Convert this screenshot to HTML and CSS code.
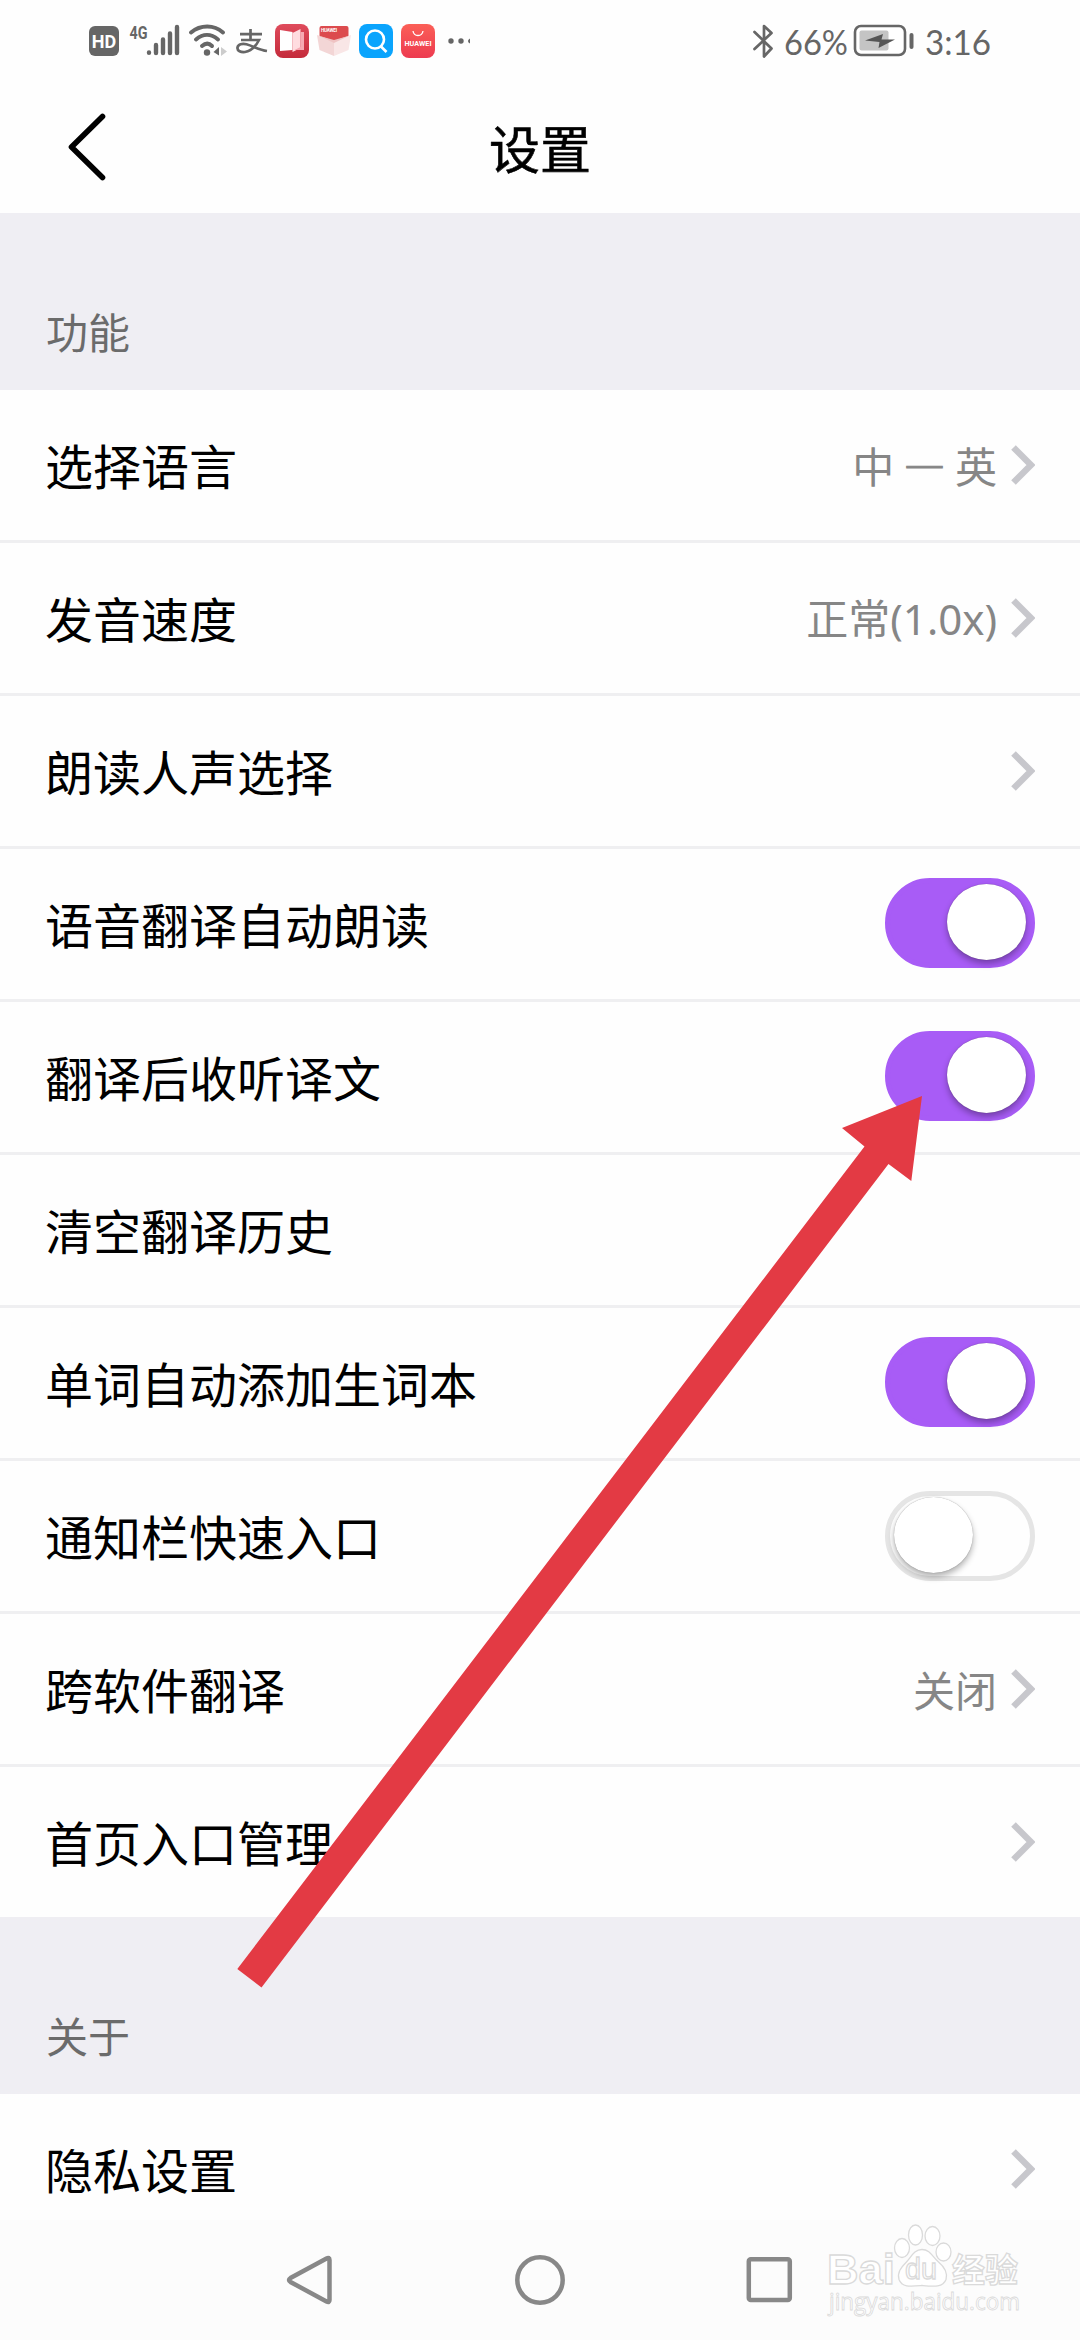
FILE: index.html
```html
<!DOCTYPE html>
<html lang="zh-CN">
<head>
<meta charset="utf-8">
<title>设置</title>
<link rel="stylesheet" href="styles.css">
</head>
<body>
<div class="screen">
  <div class="status">
    <div class="status-left">
      <span class="hd">HD</span>
      <svg class="signal" width="52" height="46" viewBox="128 18 52 46" fill="#666">
        <text class="gen" x="129.500" y="38.500" textLength="18" lengthAdjust="spacingAndGlyphs">4G</text>
        <g stroke="#666" stroke-width="4.400" stroke-linecap="round"><path d="M149 52.500v.2M156 45v8M163 39.500V53M170 33.500V53M177 27V53"/></g>
      </svg>
      <svg class="wifi" width="40" height="34" viewBox="188 24 40 34">
        <g fill="none" stroke="#666" stroke-width="4" stroke-linecap="round"><path d="M191 32.500c9.500-8 23-8 32 0M196 39.500c7-6 15-6 22 0M202 46c3.500-3 7-3 10 0"/></g>
        <circle cx="207" cy="52.500" r="3.200" fill="#666"/>
        <path d="M213.500 52l5.500-5v8.500z" fill="#666"/><path d="M221 47l6 4.500-6 4.500z" fill="#ccc"/>
      </svg>
      <svg class="pay" width="32" height="26" viewBox="236 28 32 26" fill="none" stroke="#666" stroke-width="2.700">
        <path d="M240 34.200h22M250.500 29v11M241 40h18c-3 6-7 11-14 12-4 .5-8-1-7.500-4.500.5-3 4.500-4.500 9-3.200 7 2 13 5.500 20.500 6.700"/>
      </svg>
      <svg class="app book" width="34" height="34" viewBox="0 0 34 34">
        <defs><linearGradient id="r" x1="0" y1="0" x2="0" y2="1"><stop stop-color="#df4b5c"/><stop offset="1" stop-color="#c42b3b"/></linearGradient></defs>
        <rect width="34" height="34" rx="8" fill="url(#r)"/>
        <path d="M5 6l12.500 2v18L5 27z" fill="#fff"/><path d="M17.500 9l8-4v19l-8 4z" fill="#ffdce0"/><path d="M25.500 8H29v18h-9.500l6-3z" fill="#f6a9b3"/>
      </svg>
      <svg class="app" width="34" height="34" viewBox="0 0 34 34">
        <path d="M2.500 4q0-2 2-2h25q2 0 2 2v13h-29z" fill="#dc4b4e"/><text class="boxlogo" x="4" y="8" textLength="16">HUAWEI</text>
        <path d="M0 11l17 6v15L2.500 26z" fill="#f3d6d6"/><path d="M34 11l-17 6v15l14.500-6z" fill="#f9e6e6"/><path d="M2.500 12L17 16l14.500-4L17 19z" fill="#efc3c3"/>
      </svg>
      <svg class="app" width="34" height="34" viewBox="0 0 34 34">
        <rect width="34" height="34" rx="8" fill="#0aa4fd"/><g fill="none" stroke="#fff" stroke-width="2.600"><circle cx="16" cy="15.500" r="9"/><path d="M21.500 22l6 6"/></g>
      </svg>
      <svg class="app" width="34" height="34" viewBox="0 0 34 34">
        <defs><linearGradient id="h" x1="0" y1="0" x2="0" y2="1"><stop stop-color="#fb5f57"/><stop offset="1" stop-color="#ed3b50"/></linearGradient></defs>
        <rect width="34" height="34" rx="8" fill="url(#h)"/><path d="M12 7c1 6 9 6 10 0" fill="none" stroke="#fff" stroke-width="1.300"/>
        <text class="applogo" x="3.500" y="21.500" textLength="27" lengthAdjust="spacingAndGlyphs">HUAWEI</text>
      </svg>
      <svg class="more" width="24" height="6" viewBox="0 0 24 6" fill="#666"><circle cx="3" cy="3" r="2.700"/><circle cx="13" cy="3" r="2.700"/><path d="M22 .5v5q-2-1-2-2.500t2-2.500"/></svg>
    </div>
    <div class="status-right">
      <svg width="22" height="36" viewBox="752 22 22 36" fill="none" stroke="#666" stroke-width="2.700" stroke-linejoin="round" stroke-linecap="round"><path d="M754.500 31l17 16.500-7.500 8V25l7.500 7L754.500 48"/></svg>
      <svg class="pct" width="68" height="60" viewBox="781 10 68 60"><text class="stat" x="784" y="54" textLength="64" lengthAdjust="spacingAndGlyphs">66%</text></svg>
      <svg class="battery" width="62" height="34" viewBox="853 24 62 34">
        <rect x="855" y="26" width="50" height="29" rx="6" fill="#fff" stroke="#666" stroke-width="2.600"/><rect x="859.500" y="30.500" width="29" height="20" rx="2" fill="#c4c4c4"/>
        <path d="M865 40.500l18-6.500-1.500 5.500H895L878.500 48l1-6z" fill="#555"/><rect x="909.500" y="33" width="4" height="16" rx="2" fill="#666"/>
      </svg>
      <svg class="clock" width="70" height="60" viewBox="923 10 70 60"><text class="stat" x="925" y="54" textLength="66" lengthAdjust="spacingAndGlyphs">3:16</text></svg>
    </div>
  </div>
  <header class="header">
    <svg class="back" width="40" height="70" viewBox="67 112 40 70"><path d="M102.500 116.500L71.500 147l31 30.500" fill="none" stroke="#000" stroke-width="5.600" stroke-linecap="round" stroke-linejoin="round"/></svg>
    <h1 class="title">设置</h1>
  </header>
  <h2 class="section">功能</h2>
  <ul class="list">
    <li class="row"><span>选择语言</span><span class="value">中 <span class="dash">—</span> 英</span><svg class="chev" viewBox="0 0 24 40"><path d="M2.500 2.500L20 20 2.500 37.500"/></svg></li>
    <li class="row"><span>发音速度</span><span class="value">正常<span class="rate">(1.0x)</span></span><svg class="chev" viewBox="0 0 24 40"><path d="M2.500 2.500L20 20 2.500 37.500"/></svg></li>
    <li class="row"><span>朗读人声选择</span><svg class="chev" viewBox="0 0 24 40"><path d="M2.500 2.500L20 20 2.500 37.500"/></svg></li>
    <li class="row"><span>语音翻译自动朗读</span><span class="toggle on"><i class="knob"></i></span></li>
    <li class="row"><span>翻译后收听译文</span><span class="toggle on"><i class="knob"></i></span></li>
    <li class="row"><span>清空翻译历史</span></li>
    <li class="row"><span>单词自动添加生词本</span><span class="toggle on"><i class="knob"></i></span></li>
    <li class="row"><span>通知栏快速入口</span><span class="toggle"><i class="knob"></i></span></li>
    <li class="row"><span>跨软件翻译</span><span class="value">关闭</span><svg class="chev" viewBox="0 0 24 40"><path d="M2.500 2.500L20 20 2.500 37.500"/></svg></li>
    <li class="row"><span>首页入口管理</span><svg class="chev" viewBox="0 0 24 40"><path d="M2.500 2.500L20 20 2.500 37.500"/></svg></li>
  </ul>
  <h2 class="section">关于</h2>
  <ul class="list last">
    <li class="row"><span>隐私设置</span><svg class="chev" viewBox="0 0 24 40"><path d="M2.500 2.500L20 20 2.500 37.500"/></svg></li>
  </ul>
  <nav class="nav">
    <svg width="52" height="52" viewBox="0 0 52 52"><path d="M42.500 4.500q3-1.500 3 1.500v40q0 3-3 1.500L6.500 28q-3-2 0-4z"/></svg>
    <svg width="52" height="52" viewBox="0 0 52 52"><circle cx="26" cy="26" r="22.700"/></svg>
    <svg width="52" height="52" viewBox="0 0 52 52"><rect x="4.800" y="5.300" width="41" height="40.600" rx="2"/></svg>
  </nav>
  <svg class="watermark" width="220" height="112" viewBox="815 2215 220 112">
    <g fill="#fff" stroke="#dadada" stroke-width="1.300">
      <text class="bai" x="827" y="2284" textLength="68" lengthAdjust="spacingAndGlyphs">Bai</text>
      <ellipse cx="902" cy="2248" rx="7.500" ry="9.500"/><ellipse cx="915.500" cy="2235" rx="7" ry="10"/><ellipse cx="932.500" cy="2236" rx="7.500" ry="9.500"/><ellipse cx="943.500" cy="2252" rx="7.500" ry="9"/>
      <path d="M922 2249.500c8 0 11 8 16 12 6 5 10 11 8 18-3 8-12 7-24 6-12 1-20 2-23-6-2-7 2-12 7-17 5-5 8-13 16-13z"/>
      <text class="du" x="905" y="2279" textLength="32" lengthAdjust="spacingAndGlyphs">du</text>
      <text class="jy" x="952" y="2282" textLength="66" lengthAdjust="spacingAndGlyphs">经验</text>
      <text class="url" x="829" y="2310" textLength="191" lengthAdjust="spacingAndGlyphs">jingyan.baidu.com</text>
    </g>
  </svg>
  <svg class="pointer" width="690" height="896" viewBox="235 1094 690 896"><path d="M922 1096l-80 32 22.500 18.500L237.300 1969l24.200 18.500L888.500 1164l22.800 17z" fill="#e33a44"/></svg>
</div>
</body>
</html>
```
FILE: styles.css
```css
* { box-sizing: border-box; margin: 0; padding: 0; }
body { background: #fff; font-family: "Noto Sans CJK SC", sans-serif; color: #000; }
svg { display: block; flex: none; }
.screen { position: relative; width: 1080px; height: 2340px; overflow: hidden; display: flex; flex-direction: column; background: #fefefe; }
.status { height: 82px; flex: none; display: flex; justify-content: space-between; padding: 0 87px 0 89px; }
.status-left, .status-right { display: flex; align-items: center; height: 82px; }
.hd { width: 30px; height: 30px; border-radius: 6px; background: #666; color: #fff; font: 700 18px/31px Roboto, sans-serif; text-align: center; }
.signal { margin-left: 9px; }
.gen { font: 700 18px Roboto, sans-serif; }
.wifi { margin-left: 8px; }
.pay { margin-left: 8px; }
.app { margin-left: 8px; }
.book { margin-left: 7px; }
.applogo { font: 700 6.500px Roboto, sans-serif; fill: #fff; }
.boxlogo { font: 700 4.500px Roboto, sans-serif; fill: #fff; }
.more { margin-left: 13px; }
.pct { margin-left: 7px; }
.battery { margin-left: 4px; }
.clock { margin-left: 8px; }
.stat { font: 400 34px Lato, sans-serif; fill: #666; }
.header { height: 131px; flex: none; display: grid; grid-template-columns: 67px 40px 1fr 107px; align-items: center; }
.back { grid-column: 2; margin-bottom: 1px; }
.title { font-size: 51px; line-height: 76px; font-weight: 400; text-align: center; padding-bottom: 2px; -webkit-text-stroke: .6px #000; }
.section { height: 177px; flex: none; display: flex; align-items: flex-end; padding: 0 45px 28px 46px; background: #efeef3; color: #6b6b6b; font-size: 42px; line-height: 62px; font-weight: 400; }
.list { list-style: none; flex: none; }
.row { height: 153px; border-bottom: 3px solid #efeff1; display: flex; align-items: center; padding: 0 45px; font-size: 48px; line-height: 72px; }
.row:last-child { height: 150px; border-bottom: 0; }
.row > :first-child { flex: 1; padding-bottom: 3px; }
.last { height: 126px; overflow: hidden; }
.value { color: #868686; font-size: 42px; margin-right: 14px; padding-bottom: 1px; }
.rate { font-family: "Noto Sans", sans-serif; }
.dash { -webkit-text-stroke: .8px #868686; }
.chev { width: 24px; height: 40px; fill: none; stroke: #c7c7cc; stroke-width: 6.500; }
.toggle { width: 150px; height: 90px; border: 5px solid #e5e5e5; border-radius: 45px; padding: 0 0 0 4px; }
.on { background: #a85cf6; border-color: #a85cf6; padding-left: 57px; margin-bottom: 2px; }
.knob { display: block; width: 79px; height: 76px; margin-top: 1px; border-radius: 50%; background: #fff; box-shadow: 0 4px 6px rgba(0, 0, 0, .3), 0 0 1px rgba(0, 0, 0, .4); }
.nav { height: 120px; flex: none; background: #fcfcfc; display: flex; justify-content: center; gap: 178px; align-items: center; }
.nav svg { fill: none; stroke: #888; stroke-width: 4.500; }
.watermark { position: absolute; left: 815px; top: 2215px; }
.bai { font: 700 43px "Liberation Sans", sans-serif; }
.du { font: 400 30px "Liberation Sans", sans-serif; }
.jy { font: 700 33px "Noto Sans CJK SC", sans-serif; }
.url { font: 400 23px "Open Sans", sans-serif; stroke-width: .8; }
.pointer { position: absolute; left: 235px; top: 1094px; }
```
